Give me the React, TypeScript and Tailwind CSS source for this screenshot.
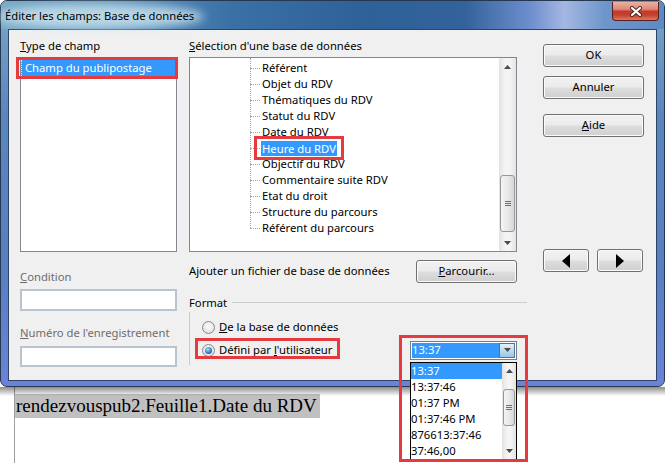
const FONT = "font-['Noto_Sans',sans-serif]";

const btn =
  'flex items-center justify-center rounded-[3px] border border-[#707070] bg-[linear-gradient(180deg,#f2f2f2_0%,#ebebeb_48%,#dddddd_52%,#cfcfcf_100%)] shadow-[inset_0_0_0_1px_#fbfbfb] text-black';

const redBox = 'absolute border-[3px] border-[#e53a40]';

function Arrow({ dir }: { dir: 'up' | 'down' }) {
  return (
    <svg width="7" height="4" viewBox="0 0 7 4">
      <path d={dir === 'up' ? 'M0 4L3.5 0L7 4Z' : 'M0 0L7 0L3.5 4Z'} fill="#4a4a4a" />
    </svg>
  );
}

function Grip() {
  return (
    <div className="flex flex-col gap-[1px]">
      <div className="w-[6px] h-px bg-[#6f6f6f]" />
      <div className="w-[6px] h-px bg-[#6f6f6f]" />
      <div className="w-[6px] h-px bg-[#6f6f6f]" />
    </div>
  );
}

function Radio({ checked }: { checked?: boolean }) {
  return (
    <span className="w-[13px] h-[13px] shrink-0 rounded-full border border-[#8a8a8a] bg-[radial-gradient(circle_at_50%_40%,#ffffff,#e4e4e4_65%,#cdcdcd)] flex items-center justify-center">
      {checked && (
        <span className="w-[7px] h-[7px] rounded-full bg-[radial-gradient(circle_at_40%_35%,#a9e0ff,#2a74c4_60%,#17468a)]" />
      )}
    </span>
  );
}

const fields = [
  'Référent',
  'Objet du RDV',
  'Thématiques du RDV',
  'Statut du RDV',
  'Date du RDV',
  'Heure du RDV',
  'Objectif du RDV',
  'Commentaire suite RDV',
  'Etat du droit',
  'Structure du parcours',
  'Référent du parcours',
];

const formats = ['13:37', '13:37:46', '01:37 PM', '01:37:46 PM', '876613:37:46', '37:46,00'];

function TitleBar() {
  return (
    <div className="-mx-[7px] h-[28px] shrink-0 flex items-start justify-between pl-[4px] pr-[5px] rounded-t-[6px] bg-[linear-gradient(90deg,#78aac8_0%,#5b92bd_18%,#3b70a6_35%,#2d6198_55%,#33629c_70%,#6f8fcf_80%,#a4b7e2_85%,#6f96cb_91%,#5d8ac2_100%)]">
      <div className="relative mt-[7px]">
        <span className="absolute -left-[8px] -right-[10px] -top-[4px] -bottom-[4px] rounded-[50%] bg-[#cfe6ee] opacity-80 blur-[5px]" />
        <span className="relative leading-[15px] text-black">Éditer les champs: Base de données</span>
      </div>
      <div className="mt-[1px] w-[47px] h-[19px] rounded-b-[4px] border border-t-0 border-[#5b1e1a] bg-[linear-gradient(180deg,#eab1a3_0%,#dc8a76_40%,#c7382b_52%,#c5402f_72%,#dc7a5d_100%)] flex items-center justify-center">
        <svg width="14" height="11" viewBox="0 0 14 11">
          <path d="M3 2L11 9M11 2L3 9" stroke="#4b2424" strokeWidth="4" strokeLinecap="round" />
          <path d="M3 2L11 9M11 2L3 9" stroke="#ffffff" strokeWidth="2.2" strokeLinecap="round" />
        </svg>
      </div>
    </div>
  );
}

function TypeColumn() {
  return (
    <div className="w-[157px] shrink-0 flex flex-col">
      <div className="h-[15px] leading-[15px]">
        <u>T</u>ype de champ
      </div>
      <div className="mt-[4px] h-[195px] border border-[#828790] bg-white pt-[2px]">
        <div className="h-[16px] flex items-center bg-[#3399ff] border-l border-dotted border-[#d8ebff] pl-[3px] text-white">
          Champ du publipostage
        </div>
      </div>
      <div className="mt-[17px] h-[15px] leading-[15px] text-[#6d6d6d]">
        <u>C</u>ondition
      </div>
      <div className="mt-[5px] h-[22px] border-2 border-[#b9c4d0] bg-white" />
      <div className="mt-[14px] h-[15px] leading-[15px] text-[#6d6d6d]">
        <u>N</u>uméro de l'enregistrement
      </div>
      <div className="mt-[6px] h-[21px] border-2 border-[#b9c4d0] bg-white" />
    </div>
  );
}

function DatabaseColumn() {
  return (
    <div className="ml-[12px] w-[328px] shrink-0 flex flex-col">
      <div className="h-[15px] leading-[15px]">
        <u>S</u>élection d'une base de données
      </div>
      <div className="mt-[4px] h-[195px] border border-[#828790] bg-white flex">
        <div className="relative flex-1">
          <div className="absolute left-[60px] top-0 h-[170px] border-l border-dotted border-[#a8a8a8]" />
          <div className="pl-[60px] pt-[2px]">
            {fields.map(f => (
              <div key={f} className="h-[16px] flex items-center">
                <span className="w-[10px] border-t border-dotted border-[#a8a8a8]" />
                {f === 'Heure du RDV' ? (
                  <span className="ml-[1px] px-[1px] h-[15px] leading-[15px] bg-[#3399ff] text-white">{f}</span>
                ) : (
                  <span className="ml-[2px]">{f}</span>
                )}
              </div>
            ))}
          </div>
        </div>
        <div className="w-[17px] flex flex-col bg-[linear-gradient(90deg,#e3e3e3,#f4f4f4_35%,#f4f4f4_65%,#e3e3e3)]">
          <div className="h-[17px] flex items-center justify-center">
            <Arrow dir="up" />
          </div>
          <div className="flex-1 flex flex-col px-[1px]">
            <div className="h-[100px]" />
            <div className="h-[57px] rounded-[3px] border border-[#979797] bg-[linear-gradient(90deg,#f4f4f4,#e9e9e9_50%,#d6d6d6)] flex items-center justify-center">
              <Grip />
            </div>
          </div>
          <div className="h-[17px] flex items-center justify-center">
            <Arrow dir="down" />
          </div>
        </div>
      </div>

      <div className="mt-[8px] h-[23px] flex items-center justify-between">
        <span>Ajouter un fichier de base de données</span>
        <div className={`${btn} w-[101px] h-[23px]`}>
          <span>
            <u>P</u>arcourir...
          </span>
        </div>
      </div>

      <div className="mt-[12px] h-[15px] flex items-center">
        <span className="leading-[15px]">Format</span>
        <div className="ml-[5px] -mr-[10px] flex-1 h-px bg-[#c9cdd2]" />
      </div>
      <div className="mt-[2px] border-l border-[#c9cdd2] pl-[12px] pt-[7px] pb-[5px]">
        <div className="h-[16px] flex items-center gap-[4px]">
          <Radio />
          <span>
            <u>D</u>e la base de données
          </span>
        </div>
        <div className="mt-[5px] h-[20px] flex items-center justify-between">
          <div className="flex items-center gap-[4px]">
            <Radio checked />
            <span>
              Défini par <u>l</u>'utilisateur
            </span>
          </div>
          <div className="w-[107px] h-[19px] border border-[#6f7f8f] bg-white flex p-[1px]">
            <div className="flex-1 bg-[#3399ff] text-white flex items-center">13:37</div>
            <div className="w-[16px] border border-[#58738d] bg-[linear-gradient(180deg,#e2f1fb,#bcdcf0_50%,#9cc6e3)] flex items-center justify-center">
              <Arrow dir="down" />
            </div>
          </div>
        </div>
      </div>
    </div>
  );
}

function ButtonColumn() {
  return (
    <div className="ml-[26px] w-[101px] shrink-0 flex flex-col">
      <div className={`${btn} mt-[6px] h-[23px] border-[#3c7fb1] shadow-[inset_0_0_0_1px_#dff2fc]`}>OK</div>
      <div className={`${btn} mt-[9px] h-[23px]`}>Annuler</div>
      <div className={`${btn} mt-[15px] h-[23px]`}>
        <span>
          <u>A</u>ide
        </span>
      </div>
      <div className="mt-[112px] flex gap-[8px]">
        <div className={`${btn} w-[46px] h-[23px]`}>
          <svg width="8" height="14" viewBox="0 0 8 14">
            <path d="M8 0L0 7L8 14Z" fill="#000" />
          </svg>
        </div>
        <div className={`${btn} w-[46px] h-[23px]`}>
          <svg width="8" height="14" viewBox="0 0 8 14">
            <path d="M0 0L8 7L0 14Z" fill="#000" />
          </svg>
        </div>
      </div>
    </div>
  );
}

export default function App() {
  return (
    <div className={`relative w-[665px] h-[463px] overflow-hidden bg-white ${FONT} text-[11.25px] text-black flex flex-col`}>
      {/* Dialog window */}
      <div className="h-[387px] shrink-0 flex flex-col rounded-[7px] border border-[#26384e] bg-[linear-gradient(180deg,#78a6c8_0%,#5a86bd_30%,#587fc2_70%,#6c82d8_100%)] px-[7px] pb-[5px]">
        <TitleBar />
        <div className="flex-1 flex border border-[#2c4466] bg-[#f0f0f0] pl-[11px] pt-[8px]">
          <TypeColumn />
          <DatabaseColumn />
          <ButtonColumn />
        </div>
      </div>

      {/* Document behind the dialog */}
      <div className="relative flex-1 bg-white pl-[14px]">
        <div className="h-full border-l border-[#a0a0a0] pt-[7px]">
          <span className="inline-block h-[24px] leading-[24px] bg-[#c0c0c0] pl-[1px] pr-[3px] text-[19px] font-['Liberation_Serif',serif]">
            rendezvouspub2.Feuille1.Date du RDV
          </span>
        </div>
        <div className="absolute left-0 right-0 top-0 h-[9px] bg-[linear-gradient(180deg,rgba(0,0,0,0.45),rgba(0,0,0,0))]" />
      </div>

      {/* Open combo list */}
      <div className="absolute left-[410px] top-[362px] w-[107px] h-[98px] border border-black bg-white flex">
        <div className="flex-1">
          {formats.map((f, i) => (
            <div key={f} className={`h-[16px] flex items-center ${i === 0 ? 'bg-[#3399ff] text-white' : ''}`}>
              {f}
            </div>
          ))}
        </div>
        <div className="w-[14px] flex flex-col bg-[linear-gradient(90deg,#e3e3e3,#f4f4f4_40%,#f4f4f4_60%,#e3e3e3)]">
          <div className="h-[16px] flex items-center justify-center">
            <Arrow dir="up" />
          </div>
          <div className="flex-1 flex flex-col px-[1px]">
            <div className="h-[10px]" />
            <div className="h-[37px] rounded-[3px] border border-[#979797] bg-[linear-gradient(90deg,#f4f4f4,#e9e9e9_50%,#d6d6d6)] flex items-center justify-center">
              <Grip />
            </div>
          </div>
          <div className="h-[16px] flex items-center justify-center">
            <Arrow dir="down" />
          </div>
        </div>
      </div>

      {/* Red highlight frames */}
      <div className={`${redBox} left-[16px] top-[57px] w-[162px] h-[22px]`} />
      <div className={`${redBox} left-[254px] top-[136px] w-[90px] h-[24px]`} />
      <div className={`${redBox} left-[195px] top-[338px] w-[145px] h-[21px]`} />
      <div className={`${redBox} left-[399px] top-[335px] w-[129px] h-[127px]`} />
    </div>
  );
}
